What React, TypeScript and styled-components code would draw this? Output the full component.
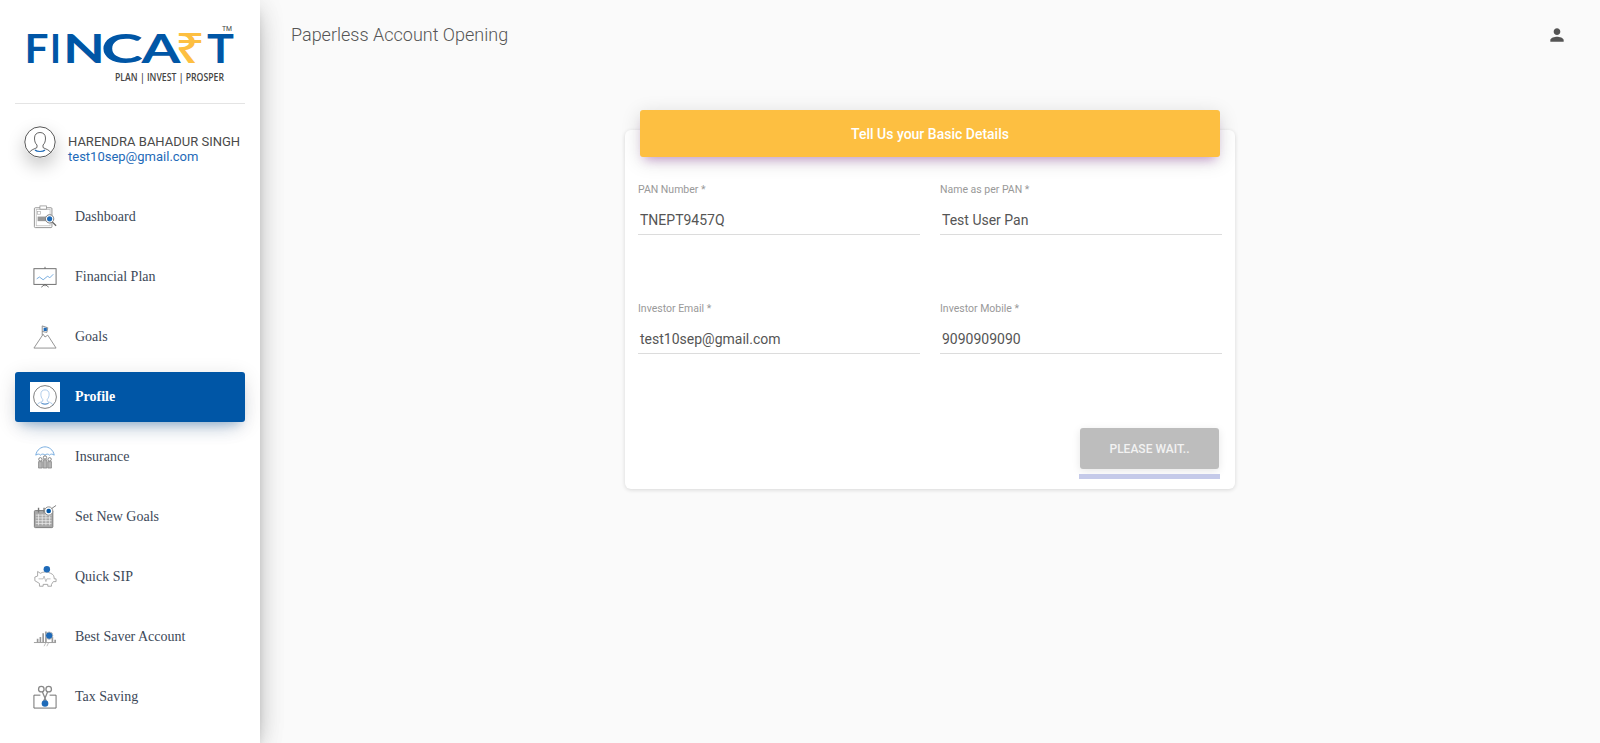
import React, { FC, ReactNode } from "react";
import styled, { createGlobalStyle } from "styled-components";

const GlobalStyle = createGlobalStyle`
  html, body {
    margin: 0;
    height: 100%;
    background: #fafafa;
    font-family: Roboto, "Liberation Sans", sans-serif;
  }
  * {
    box-sizing: border-box;
  }
`

const Page = styled.div`
  display: flex;
  height: 743px;
  overflow: hidden;
  background: #fafafa;
`

const Sidebar = styled.aside`
  width: 260px;
  flex-shrink: 0;
  background: #fff;
  padding: 0 15px;
  box-shadow: 0 10px 30px -12px rgba(0, 0, 0, 0.42), 0 4px 25px 0 rgba(0, 0, 0, 0.12), 0 8px 10px -5px rgba(0, 0, 0, 0.2);
  position: relative;
`

const LogoBox = styled.div`
  height: 104px;
  padding: 24px 0 0 8px;
  border-bottom: 1px solid #e4e4e4;
`

const UserRow = styled.div`
  display: flex;
  align-items: center;
  height: 78px;
  padding: 0 0 0 9px;
`

const UserAvatar = styled.div`
  width: 32px;
  height: 32px;
  border-radius: 50%;
  background: #fff;
  box-shadow: 0 8px 18px rgba(0, 0, 0, 0.22);
  margin-right: 12px;
  flex-shrink: 0;
  margin-top: -2px;
`

const UserText = styled.div`
  font-size: 13px;
  line-height: 15.5px;
  white-space: nowrap;
  margin-top: 12px;
`

const UserName = styled.div`
  color: #4a4a4a;
`

const UserMail = styled.div`
  color: #1e6ab8;
`

const Nav = styled.nav`
  display: flex;
  flex-direction: column;
  gap: 10px;
  padding-top: 10px;
`

const NavItem = styled.a<{ $active?: boolean }>`
  display: flex;
  align-items: center;
  height: 50px;
  border-radius: 3px;
  padding-left: 15px;
  font-family: "Liberation Serif", serif;
  font-size: 14px;
  color: ${p => (p.$active ? "#fff" : "#3c4858")};
  font-weight: ${p => (p.$active ? 700 : 400)};
  background: ${p => (p.$active ? "#0056a6" : "transparent")};
  box-shadow: ${p =>
    p.$active
      ? "0 12px 20px -10px rgba(0, 86, 166, 0.28), 0 4px 20px 0 rgba(0, 0, 0, 0.12), 0 7px 8px -5px rgba(0, 86, 166, 0.2)"
      : "none"};
`

const IconBox = styled.span<{ $active?: boolean }>`
  width: 30px;
  height: 30px;
  display: flex;
  align-items: center;
  justify-content: center;
  margin-right: 15px;
  background: ${p => (p.$active ? "#fff" : "transparent")};

  svg {
    width: 24px;
    height: 24px;
  }
`

const Main = styled.main`
  flex: 1;
  min-width: 0;
`

const TopBar = styled.header`
  height: 70px;
  display: flex;
  align-items: center;
  justify-content: space-between;
  padding: 0 33px 1px 31px;
`

const Title = styled.h1`
  margin: 0;
  font-size: 18px;
  font-weight: 300;
  color: #555;
`

const CardWrap = styled.div`
  width: 610px;
  margin: 60px 0 0 365px;
`

const Card = styled.section`
  background: #fff;
  border-radius: 6px;
  height: 359px;
  margin-top: 20px;
  padding: 0 13px;
  box-shadow: 0 1px 4px 0 rgba(0, 0, 0, 0.14);
  position: relative;
`

const CardHeader = styled.div`
  position: absolute;
  top: -20px;
  left: 15px;
  right: 15px;
  height: 47px;
  border-radius: 3px;
  background: #fdbf41;
  color: #fff;
  font-size: 14px;
  font-weight: 500;
  display: flex;
  align-items: center;
  justify-content: center;
  box-shadow: 0 4px 20px 0 rgba(0, 0, 0, 0.14), 0 7px 10px -5px rgba(156, 39, 176, 0.4);
`

const FieldGrid = styled.div`
  display: grid;
  grid-template-columns: 282px 282px;
  column-gap: 20px;
  row-gap: 68px;
  padding-top: 54px;
`

const Field = styled.div`
  height: 51px;
  border-bottom: 1px solid #dcdcdc;
`

const FieldLabel = styled.div`
  font-size: 10.5px;
  line-height: 12px;
  color: #999;
`

const FieldValue = styled.div`
  font-size: 14px;
  line-height: 16px;
  color: #555;
  padding: 16px 0 0 2px;
`

const Actions = styled.div`
  position: absolute;
  right: 15px;
  bottom: 10px;
  width: 141px;
  display: flex;
  flex-direction: column;
  align-items: center;
`

const WaitButton = styled.button`
  width: 139px;
  height: 41px;
  border: 0;
  border-radius: 3px;
  background: #bdbdbd;
  color: #f2f2f2;
  font-family: Roboto, sans-serif;
  font-size: 12px;
  font-weight: 500;
  margin-bottom: 5px;
  box-shadow: 0 2px 8px rgba(0, 0, 0, 0.1);
`

const ProgressBar = styled.div`
  width: 141px;
  height: 5px;
  background: #c5cae9;
`

const Logo: FC = () => (
  <svg width="216" height="64" viewBox="0 0 216 64">
    <g fontFamily="Lato, sans-serif" fontSize="41" fontWeight="700" fill="#0056a6">
      <text x="1.500" y="39" textLength="24" lengthAdjust="spacingAndGlyphs">F</text>
      <text x="27" y="39" textLength="11" lengthAdjust="spacingAndGlyphs">I</text>
      <text x="40" y="39" textLength="42" lengthAdjust="spacingAndGlyphs">N</text>
      <text x="78" y="39" textLength="42" lengthAdjust="spacingAndGlyphs">C</text>
      <text x="118.500" y="39" textLength="39" lengthAdjust="spacingAndGlyphs">A</text>
      <text x="152" y="39" fill="#fdbf41" fontFamily="'Noto Sans', sans-serif" fontWeight="500" textLength="30" lengthAdjust="spacingAndGlyphs">₹</text>
      <text x="184" y="39" textLength="27" lengthAdjust="spacingAndGlyphs">T</text>
    </g>
    <text x="199" y="7" fontFamily="Roboto, sans-serif" fontSize="8" fill="#444" textLength="10" lengthAdjust="spacingAndGlyphs">TM</text>
    <text x="92" y="57" fontFamily="'Open Sans', sans-serif" fontSize="10" fontWeight="600" fill="#444" textLength="109" lengthAdjust="spacingAndGlyphs">PLAN | INVEST | PROSPER</text>
  </svg>
)

const PersonOutline: FC<{ size: number; tone?: string }> = ({ size, tone = "#555" }) => (
  <svg width={size} height={size} viewBox="0 0 32 32" fill="none">
    <circle cx="16" cy="16" r="15.2" stroke="#555" strokeWidth="1" />
    <path d="M5 27c1.500-3.500 6-4 8-5.500v-2.500c-1.800-1.500-2.500-4-2.500-7 0-3.500 2.300-5.500 5.500-5.500s5.500 2 5.500 5.500c0 3-.7 5.500-2.500 7v2.500c2 1.500 6.500 2 8 5.500" stroke={tone} strokeWidth=".9" />
    <path d="M11 24c2 2 8 2 10 0" stroke="#1e6ab8" strokeWidth="1.200" />
  </svg>
)

const grey = "#8d8d8d"
const blue = "#1e6ab8"

const icons: Record<string, ReactNode> = {
  dashboard: (
    <svg viewBox="0 0 26 26" fill="none">
      <rect x="1.500" y="3" width="19" height="21.500" rx="1" stroke={grey} />
      <rect x="3.500" y="5" width="15" height="17.500" stroke="#bbb" strokeWidth=".8" />
      <rect x="7.500" y="1" width="7" height="3.500" fill="#fff" stroke={grey} strokeWidth=".8" />
      <rect x="5" y="12.500" width="12" height="5" fill="#999" />
      <rect x="5" y="7" width="3" height="3" stroke="#aaa" strokeWidth=".7" />
      <path d="M20.500 18l4.500 4.500" stroke="#666" strokeWidth="1.500" />
      <circle cx="18" cy="15" r="4.500" fill="#fff" stroke="#777" />
      <circle cx="18" cy="15" r="2.800" fill={blue} />
    </svg>
  ),
  plan: (
    <svg viewBox="0 0 26 26" fill="none">
      <rect x="1" y="4" width="24" height="17" stroke="#666" />
      <path d="M4 15l3-2 4 3 5-4 2 2 4-4" stroke="#6ea6dc" strokeWidth="1" />
      <path d="M13 2v2M13 21v2M9 24l4-3 4 3" stroke="#666" strokeWidth="1" />
    </svg>
  ),
  goals: (
    <svg viewBox="0 0 26 26" fill="none">
      <path d="M1 25h24L16 11l-3 2-2-3L1 25z" stroke={grey} />
      <path d="M10 11V1l6 2-1 5-5-1" stroke="#888" />
      <rect x="11.500" y="3" width="3.500" height="3.500" fill={blue} />
    </svg>
  ),
  profile: <PersonOutline size={26} tone="#8ab4e0" />,
  insurance: (
    <svg viewBox="0 0 26 26" fill="none">
      <path d="M3 11C4 5 9 2 13 2S22 5 23 11c-2-1.500-4-1.500-5 0-1.500-1.500-3.500-1.500-5 0-1.500-1.500-3.500-1.500-5 0-1-1.500-3-1.500-5 0z" stroke="#6ea6dc" />
      <circle cx="8" cy="15.500" r="1.800" stroke="#777" />
      <circle cx="13" cy="13.500" r="1.800" stroke="#777" />
      <circle cx="18" cy="15.500" r="1.800" stroke="#777" />
      <path d="M6 25v-7h4v7zM11 25v-9h4v9zM16 25v-7h4v7z" fill="#b5b5b5" stroke="#777" strokeWidth=".7" />
    </svg>
  ),
  setGoals: (
    <svg viewBox="0 0 26 26" fill="none">
      <rect x="1.500" y="6" width="20" height="18.500" rx="1" fill="#a8a8a8" stroke="#777" />
      <path d="M3 11h17M3 14h17M3 17h17M3 20h17M6 10v12M10 10v12M14 10v12M18 10v12" stroke="#eee" strokeWidth=".8" />
      <path d="M6 3v5M12 3v5" stroke="#777" strokeWidth="1.500" />
      <circle cx="17" cy="6.500" r="4.500" fill="#fff" stroke="#888" />
      <circle cx="17" cy="6.500" r="2.500" fill="#0056a6" />
      <path d="M20 4l5-3.500" stroke="#777" />
    </svg>
  ),
  quickSip: (
    <svg viewBox="0 0 26 26" fill="none">
      <path d="M5 7l3 2c3-2 8-2 11 0 3 1 4 3 4 6h2v3h-3l-2 3v2h-4v-2H11v2H7v-3l-5-3v-4l3-1z" stroke="#999" strokeWidth=".9" />
      <path d="M6 15h5l1-3 2 6 1-3h4" stroke="#aaa" strokeWidth=".8" />
      <circle cx="15" cy="4.500" r="3.500" fill={blue} />
    </svg>
  ),
  saver: (
    <svg viewBox="0 0 26 26" fill="none">
      <path d="M1 19h24" stroke="#999" />
      <path d="M5 19v-4M8 19v-6M11 19V9M14 19V7M21 19v-6M24 19v-3" stroke="#999" strokeWidth="1.800" />
      <circle cx="17.500" cy="11.500" r="4" fill={blue} stroke="#bbb" />
      <path d="M12 23l2-4h3l-2 4" stroke="#aaa" strokeWidth=".8" />
    </svg>
  ),
  tax: (
    <svg viewBox="0 0 26 26" fill="none">
      <path d="M8 11H1v14h24V11h-7" stroke="#666" />
      <circle cx="9" cy="4.500" r="3" stroke="#888" strokeWidth="1.400" />
      <circle cx="17" cy="4.500" r="3" stroke="#888" strokeWidth="1.400" />
      <path d="M10 7l5 12M16 7l-5 12" stroke="#888" strokeWidth="1.400" />
      <circle cx="13" cy="20" r="3.600" fill={blue} />
    </svg>
  ),
}

const navItems = [
  { key: "dashboard", label: "Dashboard" },
  { key: "plan", label: "Financial Plan" },
  { key: "goals", label: "Goals" },
  { key: "profile", label: "Profile", active: true },
  { key: "insurance", label: "Insurance" },
  { key: "setGoals", label: "Set New Goals" },
  { key: "quickSip", label: "Quick SIP" },
  { key: "saver", label: "Best Saver Account" },
  { key: "tax", label: "Tax Saving" },
]

const fields = [
  { label: "PAN Number *", value: "TNEPT9457Q" },
  { label: "Name as per PAN *", value: "Test User Pan" },
  { label: "Investor Email *", value: "test10sep@gmail.com" },
  { label: "Investor Mobile *", value: "9090909090" },
]

export default function App() {
  return (
    <Page>
      <GlobalStyle />
      <Sidebar>
        <LogoBox>
          <Logo />
        </LogoBox>
        <UserRow>
          <UserAvatar>
            <PersonOutline size={32} />
          </UserAvatar>
          <UserText>
            <UserName>HARENDRA BAHADUR SINGH</UserName>
            <UserMail>test10sep@gmail.com</UserMail>
          </UserText>
        </UserRow>
        <Nav>
          {navItems.map(item => (
            <NavItem key={item.key} $active={item.active}>
              <IconBox $active={item.active}>{icons[item.key]}</IconBox>
              {item.label}
            </NavItem>
          ))}
        </Nav>
      </Sidebar>
      <Main>
        <TopBar>
          <Title>Paperless Account Opening</Title>
          <svg width="20" height="20" viewBox="0 0 24 24" fill="#555">
            <path d="M12 12c2.210 0 4-1.790 4-4s-1.790-4-4-4-4 1.790-4 4 1.790 4 4 4zm0 2c-2.670 0-8 1.340-8 4v2h16v-2c0-2.660-5.330-4-8-4z" />
          </svg>
        </TopBar>
        <CardWrap>
          <Card>
            <CardHeader>Tell Us your Basic Details</CardHeader>
            <FieldGrid>
              {fields.map(f => (
                <Field key={f.label}>
                  <FieldLabel>{f.label}</FieldLabel>
                  <FieldValue>{f.value}</FieldValue>
                </Field>
              ))}
            </FieldGrid>
            <Actions>
              <WaitButton>PLEASE WAIT..</WaitButton>
              <ProgressBar />
            </Actions>
          </Card>
        </CardWrap>
      </Main>
    </Page>
  )
}
